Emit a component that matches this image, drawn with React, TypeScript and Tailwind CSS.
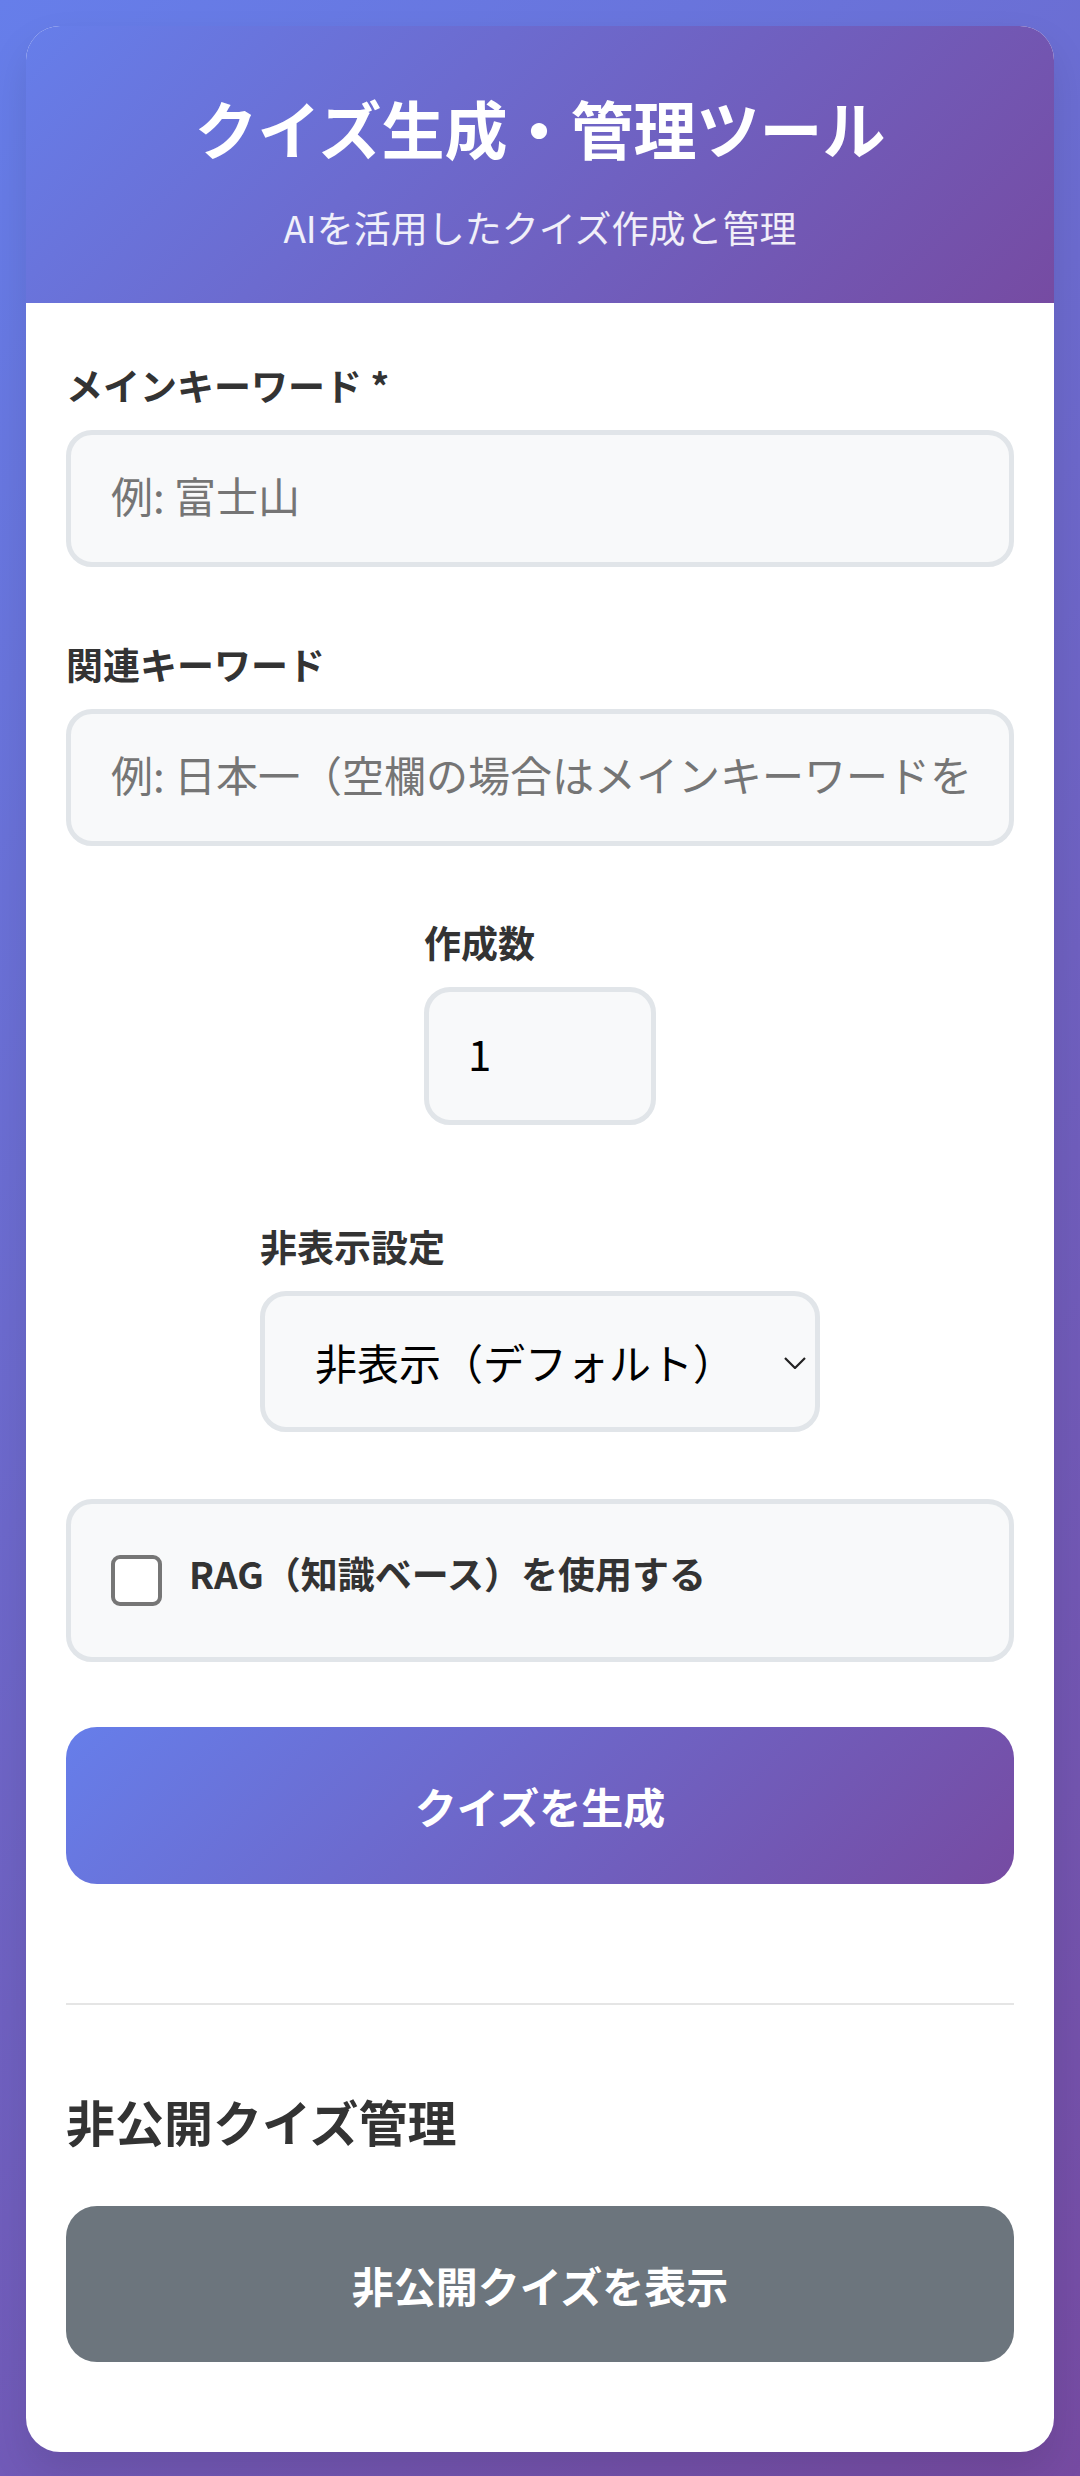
import React from "react";

const font = { fontFamily: '"Noto Sans CJK JP", "Noto Sans", sans-serif' };

export default function App() {
  return (
    <div
      className="min-h-screen w-full bg-[linear-gradient(135deg,#667eea_0%,#764ba2_100%)] px-[26px] pt-[26px] pb-[24px]"
      style={font}
    >
      <div className="bg-white rounded-[34px] overflow-hidden shadow-[0_20px_40px_rgba(0,0,0,0.1)]">
        {/* Header */}
        <div className="bg-[linear-gradient(135deg,#667eea_0%,#764ba2_100%)] text-white text-center pt-[63px] pb-[54px]">
          <h1 className="text-[63px] leading-[76px] font-bold">クイズ生成・管理ツール</h1>
          <p className="text-[37px] leading-[44px] mt-[40px] text-white/90">AIを活用したクイズ作成と管理</p>
        </div>

        {/* Body */}
        <div className="px-[40px] pt-[57px] pb-[90px]">
          {/* Main keyword */}
          <div>
            <label className="block text-[37px] leading-[50px] font-bold text-[#333] mb-[20px]">
              メインキーワード *
            </label>
            <input
              type="text"
              placeholder="例: 富士山"
              className="block w-full h-[137px] border-[5px] border-[#e1e5e9] bg-[#f8f9fa] rounded-[26px] px-[40px] pb-[8px] text-[42px] text-black placeholder:text-[#757575] outline-none"
              style={font}
            />
          </div>

          {/* Related keyword */}
          <div className="mt-[72px]">
            <label className="block text-[37px] leading-[50px] font-bold text-[#333] mb-[20px]">
              関連キーワード
            </label>
            <input
              type="text"
              placeholder="例: 日本一（空欄の場合はメインキーワードを使用）"
              className="block w-full h-[137px] border-[5px] border-[#e1e5e9] bg-[#f8f9fa] rounded-[26px] px-[40px] pb-[8px] text-[42px] text-black placeholder:text-[#757575] outline-none"
              style={font}
            />
          </div>

          {/* Count */}
          <div className="mt-[71px] flex justify-center">
            <div className="w-[232px]">
              <label className="block text-[37px] leading-[50px] font-bold text-[#333] mb-[20px]">
                作成数
              </label>
              <input
                type="text"
                defaultValue="1"
                className="block w-[232px] h-[138px] border-[5px] border-[#e1e5e9] bg-[#f8f9fa] rounded-[26px] px-[39px] pb-[8px] text-[42px] text-black outline-none"
                style={font}
              />
            </div>
          </div>

          {/* Hidden setting */}
          <div className="mt-[96px] flex justify-center">
            <div className="w-[560px]">
              <label className="block text-[37px] leading-[50px] font-bold text-[#333] mb-[20px]">
                非表示設定
              </label>
              <div className="relative w-[560px] h-[141px]">
                <select
                  defaultValue="hidden"
                  className="appearance-none block w-full h-full border-[5px] border-[#e1e5e9] bg-[#f8f9fa] rounded-[26px] pl-[50px] pr-[60px] text-[42px] text-black outline-none"
                  style={font}
                >
                  <option value="hidden">非表示（デフォルト）</option>
                  <option value="public">公開</option>
                </select>
                <svg
                  className="absolute right-[14px] top-[66px] pointer-events-none"
                  width="22"
                  height="12"
                  viewBox="0 0 22 12"
                  fill="none"
                >
                  <path d="M1 1L11 11L21 1" stroke="#222" strokeWidth="2.2" />
                </svg>
              </div>
            </div>
          </div>

          {/* RAG checkbox */}
          <div className="mt-[67px] h-[163px] border-[5px] border-[#e1e5e9] bg-[#f8f9fa] rounded-[26px] pl-[40px] flex items-center">
            <span className="block w-[51px] h-[51px] bg-white border-[4px] border-[#767676] rounded-[9px] shrink-0" />
            <span className="ml-[27px] mb-[16px] text-[37px] leading-[50px] font-bold text-[#333]">
              RAG（知識ベース）を使用する
            </span>
          </div>

          {/* Generate */}
          <button
            className="mt-[65px] w-full h-[157px] rounded-[31px] bg-[linear-gradient(135deg,#667eea_0%,#764ba2_100%)] text-white text-[42px] font-bold flex items-center justify-center"
            style={font}
          >
            クイズを生成
          </button>

          {/* Divider */}
          <div className="mt-[119px] h-[2px] bg-[#e5e5e5]" />

          {/* Private quizzes */}
          <h2 className="mt-[86px] text-[49px] leading-[60px] font-bold text-[#333]">非公開クイズ管理</h2>
          <button
            className="mt-[55px] w-full h-[156px] rounded-[31px] bg-[#6c757d] text-white text-[42px] font-bold flex items-center justify-center"
            style={font}
          >
            非公開クイズを表示
          </button>
        </div>
      </div>
    </div>
  );
}
